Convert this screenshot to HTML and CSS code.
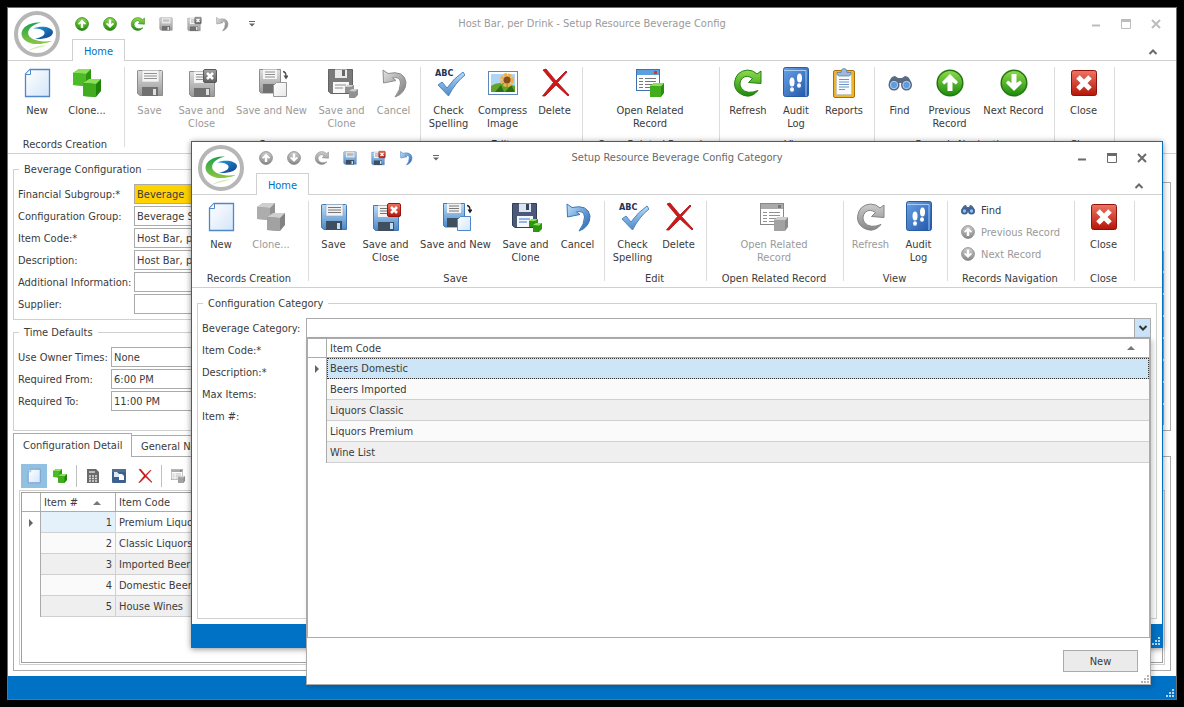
FILE: index.html
```html
<!DOCTYPE html>
<html lang="en">
<head>
    <meta charset="UTF-8">
    <meta name="viewport" content="width=device-width, initial-scale=1.0">
    <title>Setup Resource Beverage Config</title>
    <link rel="stylesheet" href="styles.css">
</head>
<body>

    <!-- Icon library -->
    <svg class="icon-defs" width="0" height="0" aria-hidden="true">
        <defs>
            <linearGradient id="g-green" x1="0" y1="0" x2="0" y2="1"><stop offset="0" stop-color="#8fdc4c"/><stop offset="1" stop-color="#1d8a0b"/></linearGradient>
            <linearGradient id="g-blue" x1="0" y1="0" x2="0" y2="1"><stop offset="0" stop-color="#b9dcf8"/><stop offset="1" stop-color="#4c88c8"/></linearGradient>
            <linearGradient id="g-book" x1="0" y1="0" x2="1" y2="1"><stop offset="0" stop-color="#6aa2e6"/><stop offset="1" stop-color="#1f56a8"/></linearGradient>
            <linearGradient id="g-red" x1="0" y1="0" x2="0" y2="1"><stop offset="0" stop-color="#ee7464"/><stop offset="1" stop-color="#b41608"/></linearGradient>
            <linearGradient id="g-page" x1="0" y1="0" x2="1" y2="1"><stop offset="0" stop-color="#ffffff"/><stop offset="1" stop-color="#d3e5f9"/></linearGradient>
            <linearGradient id="g-swoosh" x1="0" y1="0" x2="0" y2="1"><stop offset="0" stop-color="#1ba14e"/><stop offset="1" stop-color="#8cc63f"/></linearGradient>
            <linearGradient id="g-swoosh2" x1="0" y1="0" x2="1" y2="1"><stop offset="0" stop-color="#1aa3dc"/><stop offset="1" stop-color="#173a8c"/></linearGradient>
            <linearGradient id="g-undo" x1="0" y1="0" x2="1" y2="1"><stop offset="0" stop-color="#bfe2fb"/><stop offset="1" stop-color="#1f5fb0"/></linearGradient>
        </defs>
        <symbol id="i-logo" viewBox="0 0 46 46">
            <circle cx="23" cy="23" r="21" fill="#fff" stroke="#b6b6b6" stroke-width="4"/>
            <path d="M27 11.500C16 10.500 7.500 16 7.500 23C8 31 20 37 38 30C28 31.500 17 29.500 14.500 24C13 19 17 14 27 11.500Z" fill="url(#g-swoosh)"/>
            <path d="M19 17.500C27 14 38.500 16 39 21C39 26 31 28.500 21 28C28 26 31 24 30.500 21.500C30 19 26 17.500 19 17.500Z" fill="url(#g-swoosh2)"/>
            <path d="M33 34.500C27 36 20 37.500 14 40C18 36.500 25 34.500 33 34.500Z" fill="#d4ecb4"/>
        </symbol>
        <symbol id="i-new" viewBox="0 0 32 32">
            <path d="M9 2.500H28.500V29.500H4.500V7Z" fill="url(#g-page)" stroke="#4f87c9" stroke-width="1.300"/>
            <path d="M9.500 2.500V7.500H4.500" fill="#fff" stroke="#4f87c9"/>
        </symbol>
        <symbol id="i-clone" viewBox="0 0 32 32">
            <path d="M8 2L20 2L20 13L15 19L2 18V6Z" fill="#2c9612"/>
            <path d="M2 6L8 2H20L15 7Z" fill="#8be05a"/><path d="M2 6L15 7V19L2 18Z" fill="#4cbb27"/>
            <path d="M18 12H30V24L25 30L12 29V16Z" fill="#1f820b"/>
            <path d="M12 16L18 12H30L25 17Z" fill="#8be05a"/><path d="M12 16L25 17V30L12 29Z" fill="#41ad1e"/>
        </symbol>
        <symbol id="i-save" viewBox="0 0 32 32">
            <path d="M3.500 4Q3.500 3.500 4.500 3.500H27.500Q28.500 3.500 28.500 4.500V28.500H6L3.500 26.500Z" fill="url(#g-blue)" stroke="#4477b5"/>
            <path d="M8 3.500H25V15H8Z" fill="#f3f3f3" stroke="#93a9c2" stroke-width=".6"/>
            <path d="M10 6.500H23M10 9H23M10 11.500H23" stroke="#777" stroke-width="1"/>
            <path d="M8 20H24V29H8Z" fill="#3f4f60"/><path d="M19 22H22V28H19Z" fill="#c9dcf0"/>
        </symbol>
        <symbol id="i-save-close" viewBox="0 0 32 32">
            <path d="M3.500 4.500H26.500L28.500 6.500V29.500H5.500L3.500 27.500Z" fill="url(#g-blue)" stroke="#4477b5"/>
            <path d="M8 4.500H22V16H8Z" fill="#f3f3f3"/>
            <path d="M10 7.500H20M10 10H20M10 12.500H20" stroke="#777"/>
            <path d="M8 21H24V30H8Z" fill="#3f4f60"/><path d="M20 22H23V28H20Z" fill="#c9dcf0"/>
            <rect x="17.500" y="2.500" width="13" height="13" rx="1.500" fill="url(#g-red)" stroke="#99150c"/>
            <path d="M21 6L27 12M27 6L21 12" stroke="#fff" stroke-width="2.600"/>
        </symbol>
        <symbol id="i-save-new" viewBox="0 0 32 32">
            <path d="M3.500 2.500H24.500V26H5L3.500 24.500Z" fill="url(#g-blue)" stroke="#4477b5"/>
            <path d="M7 2.500H21V12H7Z" fill="#f3f3f3"/>
            <path d="M9 5H19M9 7.500H19M9 10H19" stroke="#777"/>
            <path d="M7 17H19V26H7Z" fill="#3f4f60"/>
            <path d="M20.500 15.500H30.500V29.500H17.500V18.500Z" fill="url(#g-page)" stroke="#4f87c9"/>
            <path d="M27 4.500Q30 5 30 9" fill="none" stroke="#222" stroke-width="1.300"/><path d="M27.500 8.500H32.500L30 12.500Z" fill="#222"/>
        </symbol>
        <symbol id="i-save-clone" viewBox="0 0 32 32">
            <path d="M2.500 2.500H26.500V26.500H5L2.500 24.500Z" fill="#4a5a78" stroke="#313e58"/>
            <path d="M9 2.500H21V11H9Z" fill="#dde6f0"/><path d="M16 3H19V9H16Z" fill="#34435c"/>
            <path d="M7 15H23V26H7Z" fill="#f4f7fb"/><path d="M9 18H20M9 21H17" stroke="#78a2d8" stroke-width="1.300"/>
            <path d="M19 20L22 18H28V23L26 26H19Z" fill="#2c9612"/><path d="M19 20L22 18H28L25 20Z" fill="#8be05a"/>
            <path d="M23 24L26 22H32V28L29 31H23Z" fill="#2c9612"/><path d="M23 24L26 22H32L29 24.500Z" fill="#8be05a"/>
        </symbol>
        <symbol id="i-undo" viewBox="0 0 32 32">
            <path d="M5 3L5.500 16L18 13.500L14.500 11Q22 9 22.500 16Q22.500 23 17 30Q28 26 28 15Q26 3 10 6.500Z" fill="url(#g-undo)" stroke="#3b77bd" stroke-linejoin="round"/>
        </symbol>
        <symbol id="i-tick" viewBox="0 0 32 32">
            <path d="M5 18L9 15L14 21Q21 11 30 5L32 8Q22 16 15.500 29Z" fill="url(#g-blue)" stroke="#4f86c3"/>
        </symbol>
        <symbol id="i-image" viewBox="0 0 32 32">
            <rect x="1.500" y="4.500" width="29" height="23" fill="#fff" stroke="#5e86b8"/>
            <rect x="4" y="7" width="24" height="18" fill="#aed5f5"/>
            <path d="M4 19Q12 13 28 19V25H4Z" fill="#5fa52c"/><path d="M8 25L14 18L17 25ZM18 25L24 18L28 25Z" fill="#2e6f14"/>
            <circle cx="20" cy="13" r="5" fill="none" stroke="#f2b04a" stroke-width="4" stroke-dasharray="3 1"/><circle cx="20" cy="13" r="3.500" fill="#8a4d17"/>
        </symbol>
        <symbol id="i-delete" viewBox="0 0 32 32">
            <path d="M4 3L7 2L17 14L27 4L28 5L18.500 15.500L30 28L29 29L17 18L6 29H3.500L14.500 15.500Z" fill="#d0181b" stroke="#a80f12" stroke-width=".8"/>
        </symbol>
        <symbol id="i-related" viewBox="0 0 32 32">
            <rect x="2.500" y="2.500" width="23" height="21" fill="#fff" stroke="#3f72ad"/>
            <rect x="3" y="3" width="22" height="5" fill="#5e9fe0"/><rect x="20" y="4" width="3" height="3" fill="#d8371d"/>
            <path d="M5 11.500H9M11 11.500H22M5 14.500H9M11 14.500H22M5 17.500H9M11 17.500H22M5 20.500H9M11 20.500H17" stroke="#777"/>
            <path d="M16 19L20 16H30V26L27 30H16Z" fill="#2b8c12"/><path d="M16 19L20 16H30L27 19.500Z" fill="#8be05a"/><path d="M16 19L27 19.500V30H16Z" fill="#41ad1e"/>
        </symbol>
        <symbol id="i-refresh" viewBox="0 0 32 32">
            <path d="M29 4V16.500L16.500 15.500L20.500 11.500Q15 7.500 10.500 11Q6 16 9.500 21.500Q15 28 26 23.500Q20 31 12 28.500Q2 25 2.500 15.500Q4 4 15.500 3Q21 3 25 7Z" fill="url(#g-green)" stroke="#258012" stroke-linejoin="round"/>
        </symbol>
        <symbol id="i-audit" viewBox="0 0 32 32">
            <rect x="3.500" y=".5" width="25" height="29" rx="2" fill="url(#g-book)" stroke="#285da6"/>
            <path d="M4 3.500H26V29" fill="none" stroke="#a9cdf6"/>
            <ellipse cx="12" cy="15" rx="2.500" ry="4.500" fill="#fff"/><ellipse cx="12" cy="22.500" rx="2" ry="2.200" fill="#fff"/>
            <ellipse cx="19.500" cy="11" rx="2.500" ry="4.500" fill="#fff"/><ellipse cx="19" cy="18.500" rx="2" ry="2.200" fill="#fff"/>
        </symbol>
        <symbol id="i-reports" viewBox="0 0 32 32">
            <rect x="5.500" y="3.500" width="21" height="27" rx="1.500" fill="#eeb52c" stroke="#a8720d"/>
            <rect x="8.500" y="6.500" width="15" height="21" fill="#f8fbff" stroke="#b8c2cf" stroke-width=".6"/>
            <path d="M9 7.500V5.500H13Q13 1.500 16 1.500Q19 1.500 19 5.500H23V7.500L21 9H11Z" fill="#9cb9dc" stroke="#58789f" stroke-width=".7"/>
            <path d="M11 12.500H21M11 15H21M11 17.500H21M11 20H21M11 22.500H17" stroke="#6f95c8"/>
        </symbol>
        <symbol id="i-find" viewBox="0 0 32 32">
            <path d="M5 15Q7 9 11 9L14 11H18L21 9Q25 9 27 15V19H19L18 16H14L13 19H5Z" fill="#5a6b83"/>
            <circle cx="10" cy="18" r="5.500" fill="#54657e"/><circle cx="22.500" cy="18" r="5.500" fill="#54657e"/>
            <circle cx="10" cy="18" r="3.700" fill="#5f9be0" stroke="#b4d0ee"/><circle cx="22.500" cy="18" r="3.700" fill="#5f9be0" stroke="#b4d0ee"/>
        </symbol>
        <symbol id="i-find-small" viewBox="0 0 16 16">
            <path d="M2 7Q3 3 6 3L7 5H9L10 3Q13 3 14 7V9H2Z" fill="#4d6a93"/>
            <circle cx="4.500" cy="9" r="3.500" fill="#3f6293"/><circle cx="11.500" cy="9" r="3.500" fill="#3f6293"/>
            <circle cx="4.500" cy="9" r="1.700" fill="#8fc0f2"/><circle cx="11.500" cy="9" r="1.700" fill="#8fc0f2"/>
        </symbol>
        <symbol id="i-up" viewBox="0 0 32 32">
            <circle cx="16" cy="16" r="12.800" fill="url(#g-green)" stroke="#22780f" stroke-width="1.500"/>
            <path d="M16 7L24 15L22 17.500L18.500 15V24H13.500V15L10 17.500L8 15Z" fill="#fff"/>
        </symbol>
        <symbol id="i-down" viewBox="0 0 32 32">
            <circle cx="16" cy="16" r="12.800" fill="url(#g-green)" stroke="#22780f" stroke-width="1.500"/>
            <path d="M16 24L24 16L22 13.500L18.500 16V7H13.500V16L10 13.500L8 16Z" fill="#fff"/>
        </symbol>
        <symbol id="i-close" viewBox="0 0 32 32">
            <rect x="3.500" y="3.500" width="25" height="25" rx="2" fill="url(#g-red)" stroke="#8e1409"/>
            <path d="M10 10L22 22M22 10L10 22" stroke="#fff" stroke-width="5"/>
        </symbol>
        <symbol id="i-calc" viewBox="0 0 16 16">
            <path d="M2 1H11L14 4V15H2Z" fill="#6b6b6b"/><path d="M4 3H10V5H4Z" fill="#bbb"/>
            <path d="M4 8H12M4 10.500H12M4 13H12" stroke="#ddd" stroke-width="1.300" stroke-dasharray="2 1"/>
        </symbol>
        <symbol id="i-copy" viewBox="0 0 16 16">
            <rect x="1" y="1" width="14" height="14" rx="1" fill="#3c618f"/><rect x="1" y="1" width="14" height="3" fill="#54708f"/>
            <path d="M3 4H6L8 6V9H3Z" fill="#dce8f6"/><path d="M8 6H11L13 8V12H8Z" fill="#fff"/>
        </symbol>
        <symbol id="i-grip" viewBox="0 0 8 8">
            <path d="M6 0H8V2H6ZM3 3H5V5H3ZM6 3H8V5H6ZM0 6H2V8H0ZM3 6H5V8H3ZM6 6H8V8H6Z"/>
        </symbol>
    </svg>

    <main class="window main-window">
        <header class="window-header">
            <svg class="logo"><use href="#i-logo"/></svg>
            <div class="titlebar">
                <div class="quick-access">
                    <button aria-label="Previous"><svg><use href="#i-up"/></svg></button>
                    <button aria-label="Next"><svg><use href="#i-down"/></svg></button>
                    <button aria-label="Refresh"><svg><use href="#i-refresh"/></svg></button>
                    <button aria-label="Save" disabled><svg><use href="#i-save"/></svg></button>
                    <button aria-label="Save and Close" disabled><svg><use href="#i-save-close"/></svg></button>
                    <button aria-label="Undo" disabled><svg><use href="#i-undo"/></svg></button>
                    <button class="customize" aria-label="Customize"><svg viewBox="0 0 16 16"><path d="M5 5.500H11" stroke="#666"/><path d="M5 7.500H11L8 10.500Z" fill="#666"/></svg></button>
                </div>
                <h1>Host Bar, per Drink - Setup Resource Beverage Config</h1>
                <div class="window-buttons">
                    <button aria-label="Minimize"><svg viewBox="0 0 16 16"><path d="M4 9.500H12" stroke-width="2"/></svg></button>
                    <button aria-label="Maximize"><svg viewBox="0 0 16 16"><path d="M3.500 4V12.500H12.500V4"/><path d="M3 4.500H13" stroke-width="3"/></svg></button>
                    <button aria-label="Close window"><svg viewBox="0 0 16 16"><path d="M4 4L12 12M12 4L4 12" stroke-width="2"/></svg></button>
                </div>
            </div>
            <nav class="tab-row">
                <button class="ribbon-tab">Home</button>
                <button class="collapse" aria-label="Collapse ribbon"><svg viewBox="0 0 16 16"><path d="M4.500 10L8 6.500L11.500 10"/></svg></button>
            </nav>
        </header>

        <div class="ribbon">
            <section class="group group-create">
                <div class="tools">
                    <button class="w-44"><svg><use href="#i-new"/></svg>New</button>
                    <button class="w-56"><svg><use href="#i-clone"/></svg>Clone...</button>
                </div>
                <h2>Records Creation</h2>
            </section>
            <section class="group group-save">
                <div class="tools">
                    <button class="w-44" disabled><svg><use href="#i-save"/></svg>Save</button>
                    <button class="w-60" disabled><svg><use href="#i-save-close"/></svg>Save and<br>Close</button>
                    <button class="w-80" disabled><svg><use href="#i-save-new"/></svg>Save and New</button>
                    <button class="w-60" disabled><svg><use href="#i-save-clone"/></svg>Save and<br>Clone</button>
                    <button class="w-44" disabled><svg><use href="#i-undo"/></svg>Cancel</button>
                </div>
                <h2>Save</h2>
            </section>
            <section class="group group-edit">
                <div class="tools">
                    <button class="w-48"><svg><text x="2" y="9" class="abc">ABC</text><use href="#i-tick"/></svg>Check<br>Spelling</button>
                    <button class="w-60"><svg><use href="#i-image"/></svg>Compress<br>Image</button>
                    <button class="w-44"><svg><use href="#i-delete"/></svg>Delete</button>
                </div>
                <h2>Edit</h2>
            </section>
            <section class="group group-related">
                <div class="tools">
                    <button class="w-80"><svg><use href="#i-related"/></svg>Open Related<br>Record</button>
                </div>
                <h2>Open Related Record</h2>
            </section>
            <section class="group group-view">
                <div class="tools">
                    <button class="w-48"><svg><use href="#i-refresh"/></svg>Refresh</button>
                    <button class="w-48"><svg><use href="#i-audit"/></svg>Audit<br>Log</button>
                    <button class="w-48"><svg><use href="#i-reports"/></svg>Reports</button>
                </div>
                <h2>View</h2>
            </section>
            <section class="group group-nav">
                <div class="tools">
                    <button class="w-44"><svg><use href="#i-find"/></svg>Find</button>
                    <button class="w-56"><svg><use href="#i-up"/></svg>Previous<br>Record</button>
                    <button class="w-72"><svg><use href="#i-down"/></svg>Next Record</button>
                </div>
                <h2>Records Navigation</h2>
            </section>
            <section class="group group-close">
                <div class="tools">
                    <button class="w-48"><svg><use href="#i-close"/></svg>Close</button>
                </div>
                <h2>Close</h2>
            </section>
        </div>

        <div class="form-area">
            <div class="form-left">
                <fieldset class="config-fields">
                    <legend>Beverage Configuration</legend>
                    <div class="field"><label for="subgroup">Financial Subgroup:*</label><input class="required" id="subgroup" value="Beverage"></div>
                    <div class="field"><label for="group">Configuration Group:</label><input id="group" value="Beverage Service"></div>
                    <div class="field"><label for="code">Item Code:*</label><input id="code" value="Host Bar, per Drink"></div>
                    <div class="field"><label for="description">Description:</label><input id="description" value="Host Bar, per Drink"></div>
                    <div class="field"><label for="info">Additional Information:</label><input id="info"></div>
                    <div class="field"><label for="supplier">Supplier:</label><input id="supplier"></div>
                </fieldset>
                <fieldset class="time-fields">
                    <legend>Time Defaults</legend>
                    <div class="field"><label for="owner">Use Owner Times:</label><input id="owner" value="None"></div>
                    <div class="field"><label for="from">Required From:</label><input id="from" value="6:00 PM"></div>
                    <div class="field"><label for="to">Required To:</label><input id="to" value="11:00 PM"></div>
                </fieldset>
            </div>
            <div class="form-right">
                <input aria-label="Value 1"><input aria-label="Value 2"><input aria-label="Value 3"><input aria-label="Value 4">
                <input aria-label="Value 5"><input aria-label="Value 6"><input aria-label="Value 7"><input aria-label="Value 8">
            </div>
        </div>

        <section class="detail">
            <div class="detail-tabs">
                <button class="active">Configuration Detail</button>
                <button>General Notes</button>
            </div>
            <div class="detail-panel">
                <div class="toolbar">
                    <button class="pressed" aria-label="New item"><svg><use href="#i-new"/></svg></button>
                    <button aria-label="Clone item"><svg><use href="#i-clone"/></svg></button>
                    <span class="divider"></span>
                    <button aria-label="Calculate"><svg><use href="#i-calc"/></svg></button>
                    <button aria-label="Copy"><svg><use href="#i-copy"/></svg></button>
                    <button class="remove" aria-label="Delete item"><svg><use href="#i-delete"/></svg></button>
                    <span class="divider"></span>
                    <button aria-label="Open related" disabled><svg><use href="#i-related"/></svg></button>
                </div>
                <div class="grid-frame">
                    <div class="grid">
                        <table>
                            <thead>
                                <tr><th class="marker"></th><th class="number">Item # <svg class="sort" viewBox="0 0 8 4"><path d="M0 4L4 0L8 4Z"/></svg></th><th>Item Code</th></tr>
                            </thead>
                            <tbody>
                                <tr class="current"><td class="marker"><svg viewBox="0 0 4 8"><path d="M0 0L4 4L0 8Z"/></svg></td><td class="number">1</td><td>Premium Liquors</td></tr>
                                <tr><td class="marker"></td><td class="number">2</td><td>Classic Liquors</td></tr>
                                <tr><td class="marker"></td><td class="number">3</td><td>Imported Beer</td></tr>
                                <tr><td class="marker"></td><td class="number">4</td><td>Domestic Beer</td></tr>
                                <tr><td class="marker"></td><td class="number">5</td><td>House Wines</td></tr>
                            </tbody>
                        </table>
                    </div>
                </div>
            </div>
        </section>

        <footer class="statusbar"><svg class="grip"><use href="#i-grip"/></svg></footer>
    </main>

    <!-- Category dialog -->
    <div class="window dialog" role="dialog" aria-labelledby="dialog-title">
        <header class="window-header">
            <svg class="logo"><use href="#i-logo"/></svg>
            <div class="titlebar">
                <div class="quick-access">
                    <button aria-label="Previous" disabled><svg><use href="#i-up"/></svg></button>
                    <button aria-label="Next" disabled><svg><use href="#i-down"/></svg></button>
                    <button aria-label="Refresh" disabled><svg><use href="#i-refresh"/></svg></button>
                    <button aria-label="Save"><svg><use href="#i-save"/></svg></button>
                    <button aria-label="Save and Close"><svg><use href="#i-save-close"/></svg></button>
                    <button aria-label="Undo"><svg><use href="#i-undo"/></svg></button>
                    <button class="customize" aria-label="Customize"><svg viewBox="0 0 16 16"><path d="M5 5.500H11" stroke="#666"/><path d="M5 7.500H11L8 10.500Z" fill="#666"/></svg></button>
                </div>
                <h1 id="dialog-title">Setup Resource Beverage Config Category</h1>
                <div class="window-buttons">
                    <button aria-label="Minimize"><svg viewBox="0 0 16 16"><path d="M4 9.500H12" stroke-width="2"/></svg></button>
                    <button aria-label="Maximize"><svg viewBox="0 0 16 16"><path d="M3.500 4V12.500H12.500V4"/><path d="M3 4.500H13" stroke-width="3"/></svg></button>
                    <button aria-label="Close window"><svg viewBox="0 0 16 16"><path d="M4 4L12 12M12 4L4 12" stroke-width="2"/></svg></button>
                </div>
            </div>
            <nav class="tab-row">
                <button class="ribbon-tab">Home</button>
                <button class="collapse" aria-label="Collapse ribbon"><svg viewBox="0 0 16 16"><path d="M4.500 10L8 6.500L11.500 10"/></svg></button>
            </nav>
        </header>

        <div class="ribbon">
            <section class="group group-create">
                <div class="tools">
                    <button class="w-44"><svg><use href="#i-new"/></svg>New</button>
                    <button class="w-56" disabled><svg><use href="#i-clone"/></svg>Clone...</button>
                </div>
                <h2>Records Creation</h2>
            </section>
            <section class="group group-save">
                <div class="tools">
                    <button class="w-44"><svg><use href="#i-save"/></svg>Save</button>
                    <button class="w-60"><svg><use href="#i-save-close"/></svg>Save and<br>Close</button>
                    <button class="w-80"><svg><use href="#i-save-new"/></svg>Save and New</button>
                    <button class="w-60"><svg><use href="#i-save-clone"/></svg>Save and<br>Clone</button>
                    <button class="w-44"><svg><use href="#i-undo"/></svg>Cancel</button>
                </div>
                <h2>Save</h2>
            </section>
            <section class="group group-edit-short">
                <div class="tools">
                    <button class="w-48"><svg><text x="2" y="9" class="abc">ABC</text><use href="#i-tick"/></svg>Check<br>Spelling</button>
                    <button class="w-44"><svg><use href="#i-delete"/></svg>Delete</button>
                </div>
                <h2>Edit</h2>
            </section>
            <section class="group group-related">
                <div class="tools">
                    <button class="w-80" disabled><svg><use href="#i-related"/></svg>Open Related<br>Record</button>
                </div>
                <h2>Open Related Record</h2>
            </section>
            <section class="group group-view-short">
                <div class="tools">
                    <button class="w-48" disabled><svg><use href="#i-refresh"/></svg>Refresh</button>
                    <button class="w-48"><svg><use href="#i-audit"/></svg>Audit<br>Log</button>
                </div>
                <h2>View</h2>
            </section>
            <section class="group group-nav-list">
                <div class="tool-list">
                    <button><svg><use href="#i-find-small"/></svg>Find</button>
                    <button disabled><svg><use href="#i-up"/></svg>Previous Record</button>
                    <button disabled><svg><use href="#i-down"/></svg>Next Record</button>
                </div>
                <h2>Records Navigation</h2>
            </section>
            <section class="group group-close">
                <div class="tools">
                    <button class="w-48"><svg><use href="#i-close"/></svg>Close</button>
                </div>
                <h2>Close</h2>
            </section>
        </div>

        <fieldset class="category-fields">
            <legend>Configuration Category</legend>
            <div class="field">
                <label for="category">Beverage Category:</label>
                <div class="combo">
                    <input id="category">
                    <button class="combo-arrow" aria-label="Open list"><svg viewBox="0 0 10 8"><path d="M1.500 2L5 5.500L8.500 2"/></svg></button>
                    <div class="popup">
                        <div class="popup-grid">
                            <table>
                                <thead>
                                    <tr><th class="marker"></th><th><div class="sorted">Item Code <svg class="sort" viewBox="0 0 8 4"><path d="M0 4L4 0L8 4Z"/></svg></div></th></tr>
                                </thead>
                                <tbody>
                                    <tr class="selected"><td class="marker"><svg viewBox="0 0 4 8"><path d="M0 0L4 4L0 8Z"/></svg></td><td>Beers Domestic</td></tr>
                                    <tr><td class="marker"></td><td>Beers Imported</td></tr>
                                    <tr><td class="marker"></td><td>Liquors Classic</td></tr>
                                    <tr><td class="marker"></td><td>Liquors Premium</td></tr>
                                    <tr><td class="marker"></td><td>Wine List</td></tr>
                                </tbody>
                            </table>
                        </div>
                        <div class="popup-footer">
                            <button>New</button>
                            <svg class="grip grey"><use href="#i-grip"/></svg>
                        </div>
                    </div>
                </div>
            </div>
            <div class="field"><span>Item Code:*</span></div>
            <div class="field"><span>Description:*</span></div>
            <div class="field"><span>Max Items:</span></div>
            <div class="field"><span>Item #:</span></div>
        </fieldset>

        <footer class="statusbar"><svg class="grip"><use href="#i-grip"/></svg></footer>
    </div>

</body>
</html>
```
FILE: styles.css
```css
* {
    box-sizing: border-box;
}
body {
    margin: 0;
    padding: 7px;
    min-height: 100vh;
    background-color: #000;
    color: #3b3b3b;
    font-family: "DejaVu Sans Condensed", Tahoma, sans-serif;
    font-size: 11px;
    line-height: 13px;
    display: flex;
}
h1, h2 {
    margin: 0;
    font-size: 11px;
    font-weight: normal;
}
button, input {
    font-family: inherit;
    font-size: 11px;
    line-height: 13px;
    color: inherit;
}
button {
    padding: 0;
    border: none;
    background: none;
    white-space: nowrap;
}
button:disabled {
    color: #9a9a9a;
}
button:disabled svg {
    filter: grayscale(1);
    opacity: 0.8;
}
.icon-defs {
    position: absolute;
}
.abc {
    font-family: "DejaVu Sans Condensed", sans-serif;
    font-size: 9px;
    font-weight: bold;
    fill: #1d3359;
}

/* Windows */
.window {
    display: flex;
    flex-direction: column;
    background-color: #fff;
}
.main-window {
    flex: 1;
    min-width: 0;
    border: 1px solid #6e6e6e;
}
.dialog {
    position: absolute;
    top: 141px;
    left: 191px;
    right: 21px;
    border: 1px solid #0072c6;
    box-shadow: 0 1px 6px rgba(0, 0, 0, 0.45);
}
.window-header {
    position: relative;
    border-bottom: 1px solid #d0d0d0;
}
.logo {
    position: absolute;
    top: 3px;
    left: 6px;
    width: 46px;
    height: 46px;
}
.titlebar {
    display: grid;
    grid-template-columns: 1fr auto 1fr;
    align-items: center;
    height: 31px;
}
.titlebar h1 {
    color: #9a9a9a;
}
.dialog h1 {
    color: #6a6a6a;
}
.quick-access {
    display: flex;
    padding-left: 60px;
}
.quick-access button {
    width: 28px;
    height: 16px;
}
.quick-access .customize {
    width: 32px;
}
.quick-access svg, .toolbar svg, .tool-list svg {
    display: block;
    width: 16px;
    height: 16px;
    margin: 0 auto;
}
.window-buttons {
    display: flex;
    justify-content: flex-end;
    padding-right: 5px;
}
.window-buttons button {
    width: 30px;
    height: 16px;
}
.window-buttons svg, .collapse svg {
    display: block;
    width: 16px;
    height: 16px;
    margin: 0 auto;
    fill: none;
    stroke: #6a6a6a;
}
.main-window .window-buttons svg {
    stroke: #bdbdbd;
}
.tab-row {
    display: flex;
    justify-content: space-between;
    align-items: flex-end;
    height: 21px;
    padding-right: 15px;
}
.ribbon-tab {
    width: 53px;
    height: 22px;
    margin-left: 64px;
    margin-bottom: -1px;
    padding-top: 2px;
    border: 1px solid #d0d0d0;
    border-bottom: none;
    background-color: #fff;
    color: #0072c6;
}
.collapse svg {
    stroke-width: 2;
}

/* Ribbon */
.ribbon {
    display: flex;
    height: 93px;
    padding-top: 6px;
    border-bottom: 1px solid #d0d0d0;
}
.group {
    display: flex;
    flex-direction: column;
    justify-content: space-between;
    padding: 0 3px 2px 0;
    background: linear-gradient(#dcdcdc, #dcdcdc) right top / 1px 80px no-repeat;
}
.group h2 {
    text-align: center;
    white-space: nowrap;
}
.group-create {
    width: 117px;
}
.group-save {
    width: 296px;
}
.group-edit {
    width: 162px;
}
.group-edit-short {
    width: 102px;
}
.group-related {
    width: 137px;
}
.group-view {
    width: 155px;
}
.group-view-short {
    width: 104px;
}
.group-nav {
    width: 180px;
}
.group-nav-list {
    width: 127px;
}
.group-close {
    width: 60px;
}
.tools {
    display: flex;
    justify-content: center;
}
.tools button {
    display: block;
    align-self: flex-start;
}
.tools svg {
    display: block;
    width: 32px;
    height: 32px;
    margin: 0 auto 5px;
    overflow: visible;
}
.w-44 {
    width: 44px;
}
.w-48 {
    width: 48px;
}
.w-56 {
    width: 56px;
}
.w-60 {
    width: 60px;
}
.w-72 {
    width: 72px;
}
.w-80 {
    width: 80px;
}
.tool-list {
    display: flex;
    flex-direction: column;
    align-items: flex-start;
    gap: 6px;
    padding: 1px 12px;
}
.tool-list button {
    display: flex;
    align-items: center;
    gap: 5px;
}

/* Forms */
fieldset {
    min-width: 0;
    margin: 0;
    padding: 8px 5px 0 4px;
    border: 1px solid #d0d0d0;
}
legend {
    margin-left: 1px;
    padding: 0 5px;
}
.field {
    display: flex;
    align-items: center;
    height: 20px;
    margin-bottom: 2px;
    white-space: nowrap;
}
.field input, .form-right input {
    flex: 1;
    min-width: 0;
    height: 20px;
    padding: 0 2px;
    border: 1px solid #ababab;
    background-color: #fff;
    outline: none;
}
.field input.required {
    background-color: #ffd200;
}
.form-area {
    display: flex;
    gap: 8px;
    padding: 9px 5px 0;
}
.form-left {
    flex: 1;
    display: flex;
    flex-direction: column;
    gap: 6px;
}
.config-fields {
    height: 157px;
}
.config-fields label {
    width: 116px;
}
.time-fields {
    flex: 1;
}
.time-fields label {
    width: 93px;
}
.form-right {
    flex: 1;
    display: flex;
    flex-direction: column;
    gap: 2px;
    margin-top: 19px;
    padding: 68px 6px 5px;
    border: 1px solid #ababab;
}
.form-right input {
    flex: none;
}

/* Detail tabs */
.detail {
    flex: 1;
    display: flex;
    flex-direction: column;
    padding: 2px 5px 5px;
}
.detail-tabs {
    display: flex;
    align-items: flex-end;
}
.detail-tabs button {
    height: 21px;
    padding: 0 9px;
    border: 1px solid #ababab;
    border-left: none;
    border-bottom: none;
}
.detail-tabs .active {
    position: relative;
    width: 119px;
    height: 24px;
    margin-bottom: -1px;
    border-left: 1px solid #ababab;
    background-color: #fff;
}
.detail-panel {
    flex: 1;
    display: flex;
    flex-direction: column;
    padding: 7px 5px 5px;
    border: 1px solid #ababab;
}
.toolbar {
    display: flex;
    align-items: center;
    padding-left: 2px;
    margin-bottom: 2px;
}
.toolbar button {
    width: 26px;
    height: 24px;
}
.toolbar .pressed {
    background-color: #92c0e0;
}
.toolbar .remove {
    stroke: #c01417;
    stroke-width: 2;
}
.divider {
    width: 1px;
    height: 22px;
    margin: 0 3px;
    background-color: #c0c0c0;
}
.grid-frame {
    flex: 1;
    display: flex;
    padding: 1px;
    border: 1px solid #d0d0d0;
}
.grid {
    flex: 1;
    border: 1px solid #a0a0a0;
}

/* Tables */
table {
    width: 100%;
    border-collapse: separate;
    border-spacing: 0;
    table-layout: fixed;
}
th {
    height: 19px;
    padding: 0 3px;
    border-right: 1px solid #ababab;
    border-bottom: 1px solid #ababab;
    font-weight: normal;
    text-align: left;
}
td {
    height: 21px;
    padding: 0 3px;
    border-right: 1px solid #d0d0d0;
    border-bottom: 1px solid #d0d0d0;
    background-color: #fafafa;
}
tbody tr:nth-child(odd) td {
    background-color: #efefef;
}
tbody tr.current td {
    background-color: #fff;
}
tbody tr.current .number {
    background-color: #e4f1fb;
}
tbody tr .marker, tbody tr:nth-child(odd) .marker {
    background-color: #fff;
    border-bottom: none;
    border-right-color: #ababab;
}
.marker {
    width: 19px;
    padding: 0;
}
.marker svg {
    display: block;
    width: 4px;
    height: 8px;
    margin: 0 auto;
    fill: #666;
}
.number {
    width: 75px;
}
td.number {
    text-align: right;
}
.sort {
    width: 8px;
    height: 4px;
    margin-left: 12px;
    vertical-align: middle;
    fill: #777;
}

/* Category dialog body */
.category-fields {
    min-height: 322px;
    margin: 9px 5px 5px;
}
.category-fields label {
    width: 104px;
}
.combo {
    position: relative;
    flex: 1;
    display: flex;
}
.combo-arrow {
    position: absolute;
    top: 0;
    right: 0;
    width: 17px;
    height: 20px;
    border: 1px solid #ababab;
    background-color: #cbe3f8;
}
.combo-arrow svg {
    display: block;
    width: 10px;
    height: 8px;
    margin: 0 auto;
    fill: none;
    stroke: #333;
    stroke-width: 2;
}
.popup {
    position: absolute;
    z-index: 2;
    top: 20px;
    left: 0;
    right: 0;
    border: 1px solid #ababab;
    background-color: #fff;
    box-shadow: 2px 2px 5px rgba(0, 0, 0, 0.2);
}
.popup-grid {
    min-height: 299px;
    border: 1px solid #ababab;
    border-top: none;
}
.popup th:last-child, .popup td:last-child {
    border-right: none;
}
.popup .selected td:last-child {
    background-color: #cde6f7;
    outline: 1px dotted #333;
    outline-offset: -1px;
}
.sorted {
    display: flex;
    justify-content: space-between;
    align-items: center;
    padding-right: 11px;
}
.popup-footer {
    position: relative;
    display: flex;
    justify-content: flex-end;
    padding: 12px;
}
.popup-footer button {
    width: 75px;
    height: 22px;
    border: 1px solid #ababab;
    background-color: #ebebeb;
}

/* Status bars */
.statusbar {
    display: flex;
    justify-content: flex-end;
    align-items: flex-end;
    height: 23px;
    padding: 2px;
    background-color: #0072c6;
}
.grip {
    width: 8px;
    height: 8px;
    fill: #b9d6ee;
}
.grip.grey {
    position: absolute;
    right: 1px;
    bottom: 1px;
    fill: #b5b5b5;
}
```
